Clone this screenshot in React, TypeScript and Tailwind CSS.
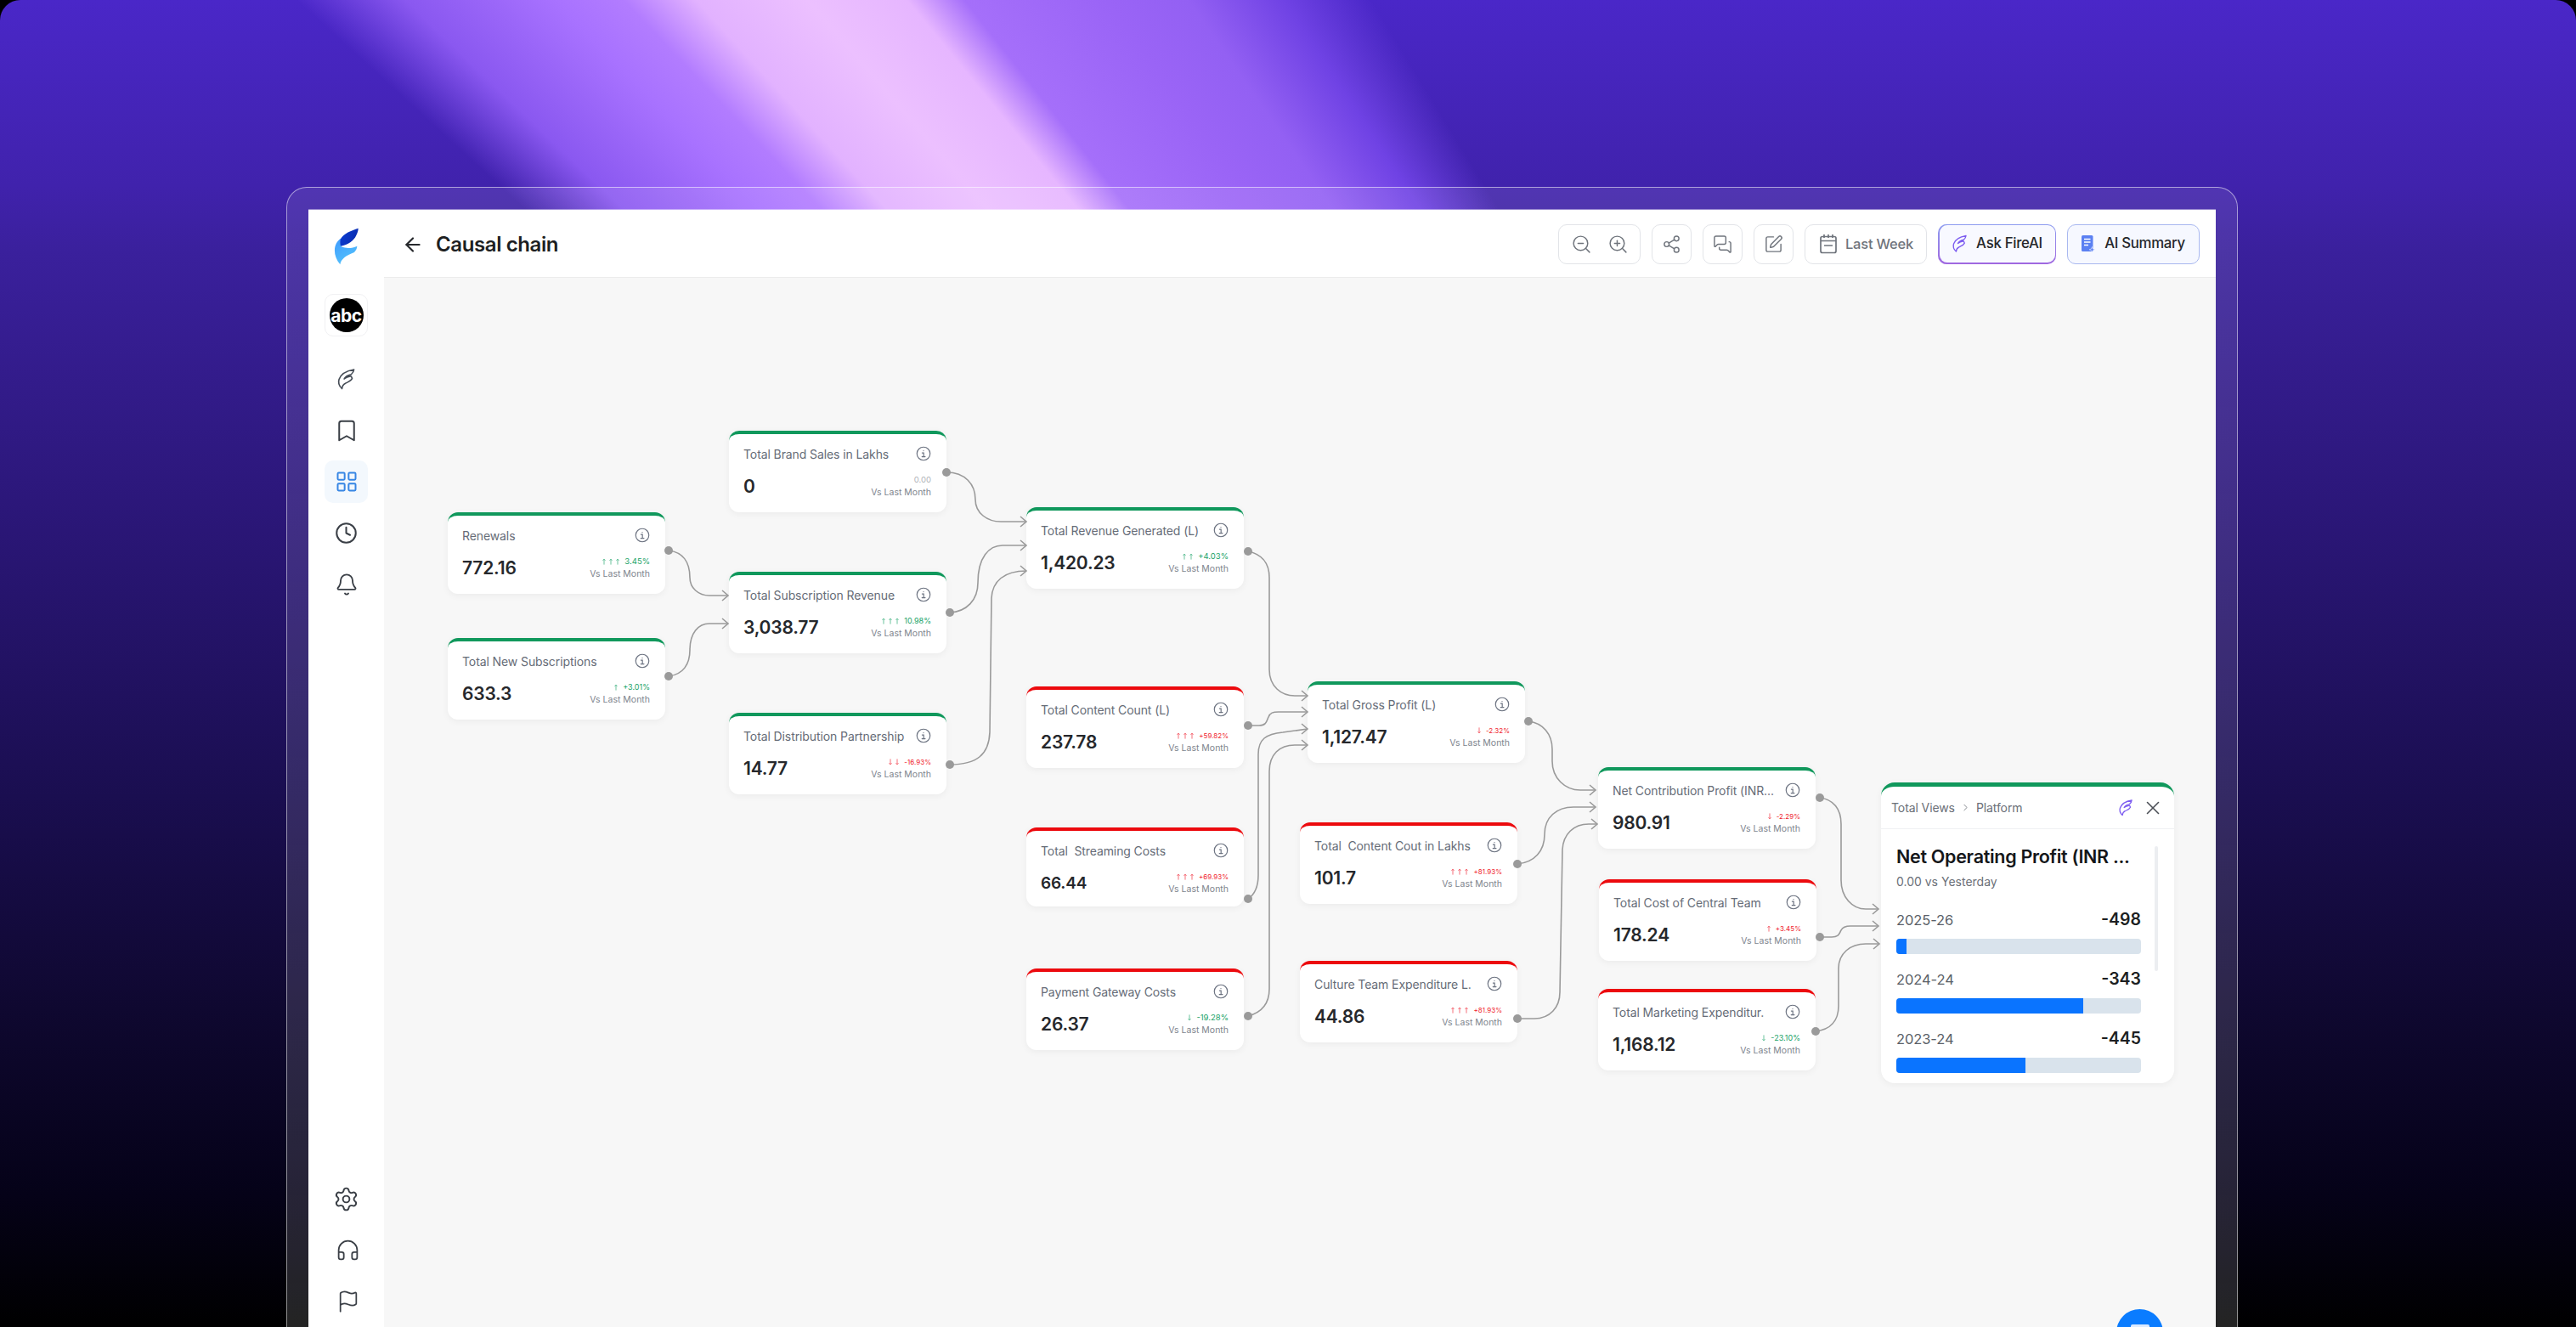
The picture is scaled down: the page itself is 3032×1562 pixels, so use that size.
import React from "react";
import {
  ArrowLeft, Bookmark, Clock, Bell, Settings, Headphones, Flag, ZoomIn, ZoomOut, Share2,
  MessagesSquare, SquarePen, LayoutGrid, ChevronRight, X,
} from "lucide-react";

const Feather = ({ className, stroke = "#444b55", w = 1.7 }: { className?: string; stroke?: string; w?: number }) => (
  <svg viewBox="0 0 24 28" fill="none" className={className} stroke={stroke} strokeWidth={w} strokeLinejoin="round" strokeLinecap="round">
    <path d="M21.5 2C13 3.5 5.5 7.5 3.2 14c-1.3 4 .4 8.5 3.6 11.5.2-3 1.5-5.2 4.2-6.6 3.2-1.6 6.8-2.6 8.3-6-.5-1.6-.8-2-1.6-2.8-3 .5-6 1.4-8.2 3.4 1.2-3 4.5-4.5 8.6-5.5C20.3 6 21.2 4.5 21.5 2Z" />
  </svg>
);

const Logo = () => (
  <svg viewBox="190 175 90 132" className="w-[30px] h-[44px]">
    <defs>
      <linearGradient id="lg1" x1="0" y1="0" x2="1" y2="0.4">
        <stop offset="0" stopColor="#0b3fd6" />
        <stop offset="1" stopColor="#0a2cb0" />
      </linearGradient>
      <linearGradient id="lg2" x1="0" y1="0" x2="0.5" y2="1">
        <stop offset="0" stopColor="#3f9bff" />
        <stop offset="1" stopColor="#52c0fb" />
      </linearGradient>
    </defs>
    <path fill="url(#lg2)" d="M216 212C190 228 182 268 212 305c2-18 20-32 50-43 7-8 10-16 10-22-18 8-36 10-56 2-4-10-4-20 0-30Z" />
    <path fill="url(#lg1)" d="M276 177c-24 8-52 18-62 38-3 7-3 16 0 25 26-4 46-18 55-38 4-8 7-16 7-25Z" />
  </svg>
);

const Info = () => (
  <svg viewBox="0 0 20 20" fill="none" stroke="#6b7280" strokeWidth="1.3" className="w-[18px] h-[18px] shrink-0">
    <circle cx="10" cy="10" r="8.6" />
    <path d="M8.2 9h2v5M8 14h4.2" strokeLinecap="round" />
    <circle cx="10" cy="6.2" r=".7" fill="#6b7280" stroke="none" />
  </svg>
);

const Arrow = ({ up }: { up: boolean }) => (
  <svg viewBox="0 0 5 9" fill="none" stroke="currentColor" strokeWidth=".8" className="w-[4px] h-[8px]">
    {up ? <path d="M2.5 9V1M.6 3 2.5 1l1.9 2" /> : <path d="M2.5 0v8M.6 6l1.9 2 1.9-2" />}
  </svg>
);

const Delta = ({ text, cls }: { text: string; cls: string }) => {
  const arrows = text.match(/[↑↓]/g) ?? [];
  const rest = text.replace(/[↑↓]/g, "").trim();
  return (
    <span className={`${cls} leading-[14px] h-[14px] flex items-center`}>
      {arrows.length > 0 && (
        <span className="flex items-center gap-[4px] mr-[6px]">
          {arrows.map((a, i) => <Arrow key={i} up={a === "↑"} />)}
        </span>
      )}
      {rest}
    </span>
  );
};

const Tile = ({ children, active = false }: { children: React.ReactNode; active?: boolean }) => (
  <div className={`w-[51px] h-[50px] rounded-[10px] flex items-center justify-center text-[#3a3f46] ${active ? "bg-[#f3f8fd]" : ""}`}>
    {children}
  </div>
);

type Card = { pos: string; title: string; value: string; delta: string; deltaCls: string; top: "g" | "r"; valueCls?: string; h?: string };

const GREEN = "text-[#17a266]";
const RED = "text-[#f01c2c]";

const cards: Card[] = [
  { pos: "left-[75px] top-[276px]", title: "Renewals", value: "772.16", delta: "↑↑↑ 3.45%", deltaCls: `${GREEN} text-[9.5px]`, top: "g" },
  { pos: "left-[75px] top-[424px]", title: "Total New Subscriptions", value: "633.3", delta: "↑ +3.01%", deltaCls: `${GREEN} text-[9px]`, top: "g" },
  { pos: "left-[406px] top-[180px]", title: "Total Brand Sales in Lakhs", value: "0", delta: "0.00", deltaCls: "text-[#b0b3b8] text-[9.5px]", top: "g" },
  { pos: "left-[406px] top-[346px]", title: "Total Subscription Revenue", value: "3,038.77", delta: "↑↑↑ 10.98%", deltaCls: `${GREEN} text-[9px]`, top: "g" },
  { pos: "left-[406px] top-[512px]", title: "Total Distribution Partnership", value: "14.77", delta: "↓↓ -16.93%", deltaCls: `${RED} text-[8px]`, top: "g" },
  { pos: "left-[756px] top-[270px]", title: "Total Revenue Generated (L)", value: "1,420.23", delta: "↑↑ +4.03%", deltaCls: `${GREEN} text-[9.5px]`, top: "g" },
  { pos: "left-[756px] top-[481px]", title: "Total Content Count (L)", value: "237.78", delta: "↑↑↑ +59.82%", deltaCls: `${RED} text-[8px]`, top: "r" },
  { pos: "left-[756px] top-[647px]", title: "Total  Streaming Costs", value: "66.44", delta: "↑↑↑ +69.93%", deltaCls: `${RED} text-[8px]`, top: "r", valueCls: "text-[19px]", h: "h-[93px]" },
  { pos: "left-[756px] top-[813px]", title: "Payment Gateway Costs", value: "26.37", delta: "↓ -19.28%", deltaCls: `${GREEN} text-[9.5px]`, top: "r" },
  { pos: "left-[1087px] top-[475px]", title: "Total Gross Profit (L)", value: "1,127.47", delta: "↓ -2.32%", deltaCls: `${RED} text-[8px]`, top: "g" },
  { pos: "left-[1078px] top-[641px]", title: "Total  Content Cout in Lakhs", value: "101.7", delta: "↑↑↑ +81.93%", deltaCls: `${RED} text-[8px]`, top: "r" },
  { pos: "left-[1078px] top-[804px]", title: "Culture Team Expenditure L.", value: "44.86", delta: "↑↑↑ +81.93%", deltaCls: `${RED} text-[8px]`, top: "r" },
  { pos: "left-[1429px] top-[576px]", title: "Net Contribution Profit (INR...", value: "980.91", delta: "↓ -2.29%", deltaCls: `${RED} text-[8px]`, top: "g" },
  { pos: "left-[1430px] top-[708px]", title: "Total Cost of Central Team", value: "178.24", delta: "↑ +3.45%", deltaCls: `${RED} text-[8px]`, top: "r" },
  { pos: "left-[1429px] top-[837px]", title: "Total Marketing Expenditur.", value: "1,168.12", delta: "↓ -23.10%", deltaCls: `${GREEN} text-[9px]`, top: "r" },
];

const edges: { d: string; from: [number, number]; to: [number, number] }[] = [
  { from: [787, 648], to: [857, 701], d: "M787 648C804 650 812 662 812 680C812 692 822 701 835 701L857 701" },
  { from: [787, 796], to: [857, 734], d: "M787 796C804 794 812 782 812 765C812 745 822 734 835 734L857 734" },
  { from: [1114, 556], to: [1208, 614], d: "M1114 556C1136 556 1148 570 1148 588C1148 604 1162 614 1178 614L1208 614" },
  { from: [1118, 721], to: [1208, 642], d: "M1118 721C1138 720 1151 706 1151 686C1151 656 1164 642 1180 642L1208 642" },
  { from: [1118, 900], to: [1208, 672], d: "M1118 900C1150 900 1164 888 1165 862L1167 704C1168 684 1182 672 1208 672" },
  { from: [1469, 649], to: [1539, 819], d: "M1469 649C1484 652 1494 662 1494 680L1494 788C1494 808 1508 819 1524 819L1539 819" },
  { from: [1469, 854], to: [1539, 838], d: "M1469 854L1482 854C1491 854 1491 848 1493 844C1495 839 1498 838 1505 838L1539 838" },
  { from: [1469, 1058], to: [1539, 858], d: "M1469 1058C1478 1052 1481 1042 1481 1030L1481 888C1481 870 1490 864 1510 862L1539 858" },
  { from: [1469, 1196], to: [1539, 877], d: "M1469 1196C1484 1192 1494 1182 1494 1164L1494 908C1494 888 1506 877 1524 877L1539 877" },
  { from: [1799, 849], to: [1878, 930], d: "M1799 849C1816 851 1827 864 1827 882L1827 896C1827 916 1842 930 1860 930L1878 930" },
  { from: [1786, 1017], to: [1878, 950], d: "M1786 1017C1806 1015 1818 1002 1818 982C1818 962 1832 950 1852 950L1878 950" },
  { from: [1786, 1199], to: [1880, 970], d: "M1786 1199L1806 1199C1824 1199 1836 1186 1836 1168L1839 1000C1840 982 1852 970 1870 970L1880 970" },
  { from: [2142, 939], to: [2211, 1070], d: "M2142 939C2158 941 2167 952 2167 970L2167 1036C2167 1056 2180 1070 2196 1070L2211 1070" },
  { from: [2142, 1103], to: [2211, 1090], d: "M2142 1103L2156 1103C2165 1103 2165 1098 2167 1095C2169 1091 2172 1090 2178 1090L2211 1090" },
  { from: [2137, 1214], to: [2212, 1111], d: "M2137 1214C2154 1212 2164 1202 2164 1184L2164 1140C2164 1122 2178 1111 2196 1111L2212 1111" },
];

const Node = ({ c }: { c: Card }) => (
  <div className={`absolute ${c.pos} w-[256px] ${c.h ?? "h-[96px]"} bg-white rounded-[12px] border-t-[4px] ${c.top === "g" ? "border-[#10985c]" : "border-[#ec0a0e]"} shadow-[0_2px_8px_rgba(0,0,0,0.05)] pl-[17px] pr-[18px] pt-[13px] flex flex-col`}>
    <div className="flex items-center justify-between h-[20px]">
      <span className="text-[14px] tracking-[-0.1px] text-[#666c77] whitespace-pre">{c.title}</span>
      <Info />
    </div>
    <div className="flex items-center justify-between mt-[14px] h-[30px]">
      <span className={`${c.valueCls ?? "text-[21px]"} font-semibold text-[#26282c] tracking-[-0.2px]`}>{c.value}</span>
      <div className="flex flex-col items-end">
        <Delta text={c.delta} cls={c.deltaCls} />
        <span className="text-[10.5px] leading-[16px] text-[#80858e]">Vs Last Month</span>
      </div>
    </div>
  </div>
);

const Bar = ({ label, value, fill }: { label: string; value: string; fill: string }) => (
  <div className="flex flex-col">
    <div className="flex items-center justify-between h-[24px]">
      <span className="text-[16.5px] text-[#5a5f68] tracking-[-0.1px]">{label}</span>
      <span className="text-[19.5px] font-semibold text-[#1d1f22]">{value}</span>
    </div>
    <div className="mt-[10px] h-[18px] rounded-[4px] bg-[#d9e3ec] overflow-hidden">
      <div className={`h-full bg-[#0a74ff] ${fill}`} />
    </div>
  </div>
);

const Btn = ({ children, cls }: { children: React.ReactNode; cls: string }) => (
  <div className={`h-[47px] rounded-[10px] border border-[#e2e4e8] bg-white flex items-center justify-center text-[#6f747c] ${cls}`}>{children}</div>
);

export default function App() {
  return (
    <div className="relative w-[3032px] h-[1562px] overflow-hidden bg-black font-['Inter',sans-serif]">
      <div className="absolute inset-0 rounded-t-[24px] bg-[linear-gradient(180deg,#4a27c8_0%,#4022ac_14%,#3a209c_19%,#2a1676_40%,#1a0e50_60%,#0f0830_76%,#050218_90%,#000_100%)]" />
      <div className="absolute left-0 right-0 top-0 h-[260px] bg-[conic-gradient(at_3220px_2630px,rgba(150,100,250,0)_312.5deg,#8a58f0_313.8deg,#a872ff_315.7deg,#b27cff_316.6deg,#e2b2ff_317.6deg,#ecc0ff_319.2deg,#e6b6ff_320.7deg,#a56ffa_321.6deg,#9a64f6_323.9deg,#9360f3_325.3deg,#6f42e4_327deg,rgba(80,44,210,0)_328.6deg)]" />
      <div className="relative pt-[220px] pl-[337px]">
        <div className="w-[2297px] h-[1342px] rounded-t-[24px] border-t-[1.5px] border-x-[1.5px] border-white/50 bg-[linear-gradient(180deg,rgba(255,255,255,0.09),rgba(255,255,255,0.14))] pt-[26px] px-[25px]">
          <div className="flex h-full bg-white shadow-[0_-1px_0_rgba(255,255,255,0.4)]">
            <aside className="w-[89px] shrink-0 flex flex-col items-center justify-between pt-[21px] pb-[5px]">
              <div className="flex flex-col items-center">
                <Logo />
                <div className="mt-[34px] w-[51px] h-[50px] rounded-[10px] border border-[#f1f1f3] flex items-center justify-center">
                  <div className="w-[40px] h-[40px] rounded-full bg-black flex items-center justify-center text-white text-[21px] font-bold leading-none tracking-[-0.5px]">abc</div>
                </div>
                <div className="mt-[25px] flex flex-col gap-[10.5px]">
                  <Tile><Feather className="w-[23px] h-[29px]" /></Tile>
                  <Tile><Bookmark size={30} strokeWidth={1.6} /></Tile>
                  <Tile active><LayoutGrid size={28} strokeWidth={1.7} className="text-[#3786e4]" /></Tile>
                  <Tile><Clock size={27} strokeWidth={1.8} /></Tile>
                  <Tile><Bell size={28} strokeWidth={1.6} /></Tile>
                </div>
              </div>
              <div className="flex flex-col gap-[10.5px]">
                <Tile><Settings size={31} strokeWidth={1.5} /></Tile>
                <Tile><Headphones size={29} strokeWidth={1.5} className="ml-[4px]" /></Tile>
                <Tile><Flag size={28} strokeWidth={1.5} className="ml-[4px]" /></Tile>
              </div>
            </aside>
            <main className="flex-1 flex flex-col min-w-0">
              <header className="h-[80px] shrink-0 flex items-center justify-between border-b border-[#ececec] pl-[21px] pr-[19px] pt-[1px]">
                <div className="flex items-center gap-[14px] pt-[1px]">
                  <ArrowLeft size={26} strokeWidth={2} className="text-[#26282c]" />
                  <span className="text-[24px] font-semibold tracking-[-0.4px] text-[#1d1f22]">Causal chain</span>
                </div>
                <div className="flex items-center gap-[13px]">
                  <Btn cls="w-[97px] gap-[18px]"><ZoomOut size={25} strokeWidth={1.4} /><ZoomIn size={25} strokeWidth={1.4} /></Btn>
                  <Btn cls="w-[47px]"><Share2 size={23} strokeWidth={1.5} /></Btn>
                  <Btn cls="w-[47px]"><MessagesSquare size={23} strokeWidth={1.5} /></Btn>
                  <Btn cls="w-[47px]"><SquarePen size={23} strokeWidth={1.5} /></Btn>
                  <Btn cls="w-[144px] gap-[10px] pl-[2px]">
                    <svg viewBox="0 0 20 24" fill="none" stroke="#6f747c" strokeWidth="1.7" className="w-[20px] h-[24px]">
                      <rect x="1" y="3.5" width="18" height="19" rx="2" />
                      <path d="M1 8.5h18M5 1v4M10 1v4M15 1v4M5 14h10" />
                    </svg>
                    <span className="text-[16.5px] font-medium tracking-[-0.2px]">Last Week</span>
                  </Btn>
                  <div className="w-[139px] h-[47px] rounded-[10px] p-[1.5px] bg-[linear-gradient(180deg,#8d9cf0,#a068e0)]">
                    <div className="w-full h-full rounded-[9px] bg-[#f8f9ff] flex items-center justify-center gap-[10px]">
                      <Feather className="w-[19px] h-[24px]" stroke="#7c5cf0" />
                      <span className="text-[16.8px] font-medium tracking-[-0.3px] text-[#26282c]">Ask FireAI</span>
                    </div>
                  </div>
                  <div className="w-[156px] h-[47px] rounded-[10px] border-[1.5px] border-[#a9b8f0] bg-[#f6f8ff] flex items-center justify-center gap-[11px]">
                    <svg viewBox="0 0 16 21" className="w-[16px] h-[21px]">
                      <rect x="0" y="0" width="13.5" height="19" rx="1.5" fill="#5b80f2" />
                      <path d="M3 4.5h7.5M3 8h7.5M3 11.5h5" stroke="#fff" strokeWidth="1.3" />
                      <path d="M12.5 13.5l.9 2.4 2.4.9-2.4.9-.9 2.4-.9-2.4-2.4-.9 2.4-.9Z" fill="#5b80f2" stroke="#f6f8ff" strokeWidth=".6" />
                    </svg>
                    <span className="text-[16.8px] font-medium tracking-[-0.3px] text-[#26282c]">AI Summary</span>
                  </div>
                </div>
              </header>
              <section className="relative flex-1 bg-[#f7f7f7] overflow-hidden">
                {cards.map((c) => <Node key={c.title} c={c} />)}
                <div className="absolute left-[1762px] top-[594px] w-[345px] h-[354px] bg-white rounded-[16px] border-t-[5px] border-[#10985c] shadow-[0_2px_8px_rgba(0,0,0,0.05)] flex flex-col">
                  <div className="h-[50px] shrink-0 border-b border-[#f0f1f3] flex items-center justify-between pl-[12px] pr-[12px]">
                    <div className="flex items-center gap-[6px] text-[14px] text-[#6b7078] tracking-[-0.1px]">
                      <span>Total Views</span>
                      <ChevronRight size={13} strokeWidth={1.5} />
                      <span>Platform</span>
                    </div>
                    <div className="flex items-center gap-[10px]">
                      <Feather className="w-[18px] h-[24px]" stroke="#7c5cf0" />
                      <X size={26} strokeWidth={1.5} className="text-[#4b4f56]" />
                    </div>
                  </div>
                  <div className="relative pl-[18px] pr-[39px] pt-[17px]">
                    <div className="text-[21.5px] leading-[30px] font-semibold text-[#15171a] tracking-[-0.3px] whitespace-nowrap">Net Operating Profit (INR ...</div>
                    <div className="text-[14px] leading-[20px] mt-[5px] text-[#6b7078]">0.00 vs Yesterday</div>
                    <div className="mt-[23px] flex flex-col gap-[18px]">
                      <Bar label="2025-26" value="-498" fill="w-[12px]" />
                      <Bar label="2024-24" value="-343" fill="w-[220px]" />
                      <Bar label="2023-24" value="-445" fill="w-[152px]" />
                    </div>
                    <div className="absolute right-[19px] top-[20px] w-[4px] h-[147px] rounded-full bg-[#eceef1]" />
                  </div>
                </div>
                <div className="absolute left-[2039px] top-[1214px] w-[55px] h-[55px] rounded-full bg-[#0a7cff] flex justify-center pt-[18px]">
                  <div className="w-[22px] h-[14px] rounded-[2px] bg-[#dbeaff]" />
                </div>
                <svg viewBox="452 327 2155 1235" className="absolute inset-0 w-[2155px] h-[1235px] pointer-events-none" fill="none">
                  {edges.map((e, i) => (
                    <g key={i}>
                      <path d={e.d} stroke="#9a9a9a" strokeWidth="1.6" />
                      <path d={`M${e.to[0] - 7} ${e.to[1] - 6}L${e.to[0]} ${e.to[1]}L${e.to[0] - 7} ${e.to[1] + 6}`} stroke="#9a9a9a" strokeWidth="1.6" />
                      <circle cx={e.from[0]} cy={e.from[1]} r="5" fill="#9a9a9a" />
                    </g>
                  ))}
                </svg>
              </section>
            </main>
          </div>
        </div>
      </div>
    </div>
  );
}
